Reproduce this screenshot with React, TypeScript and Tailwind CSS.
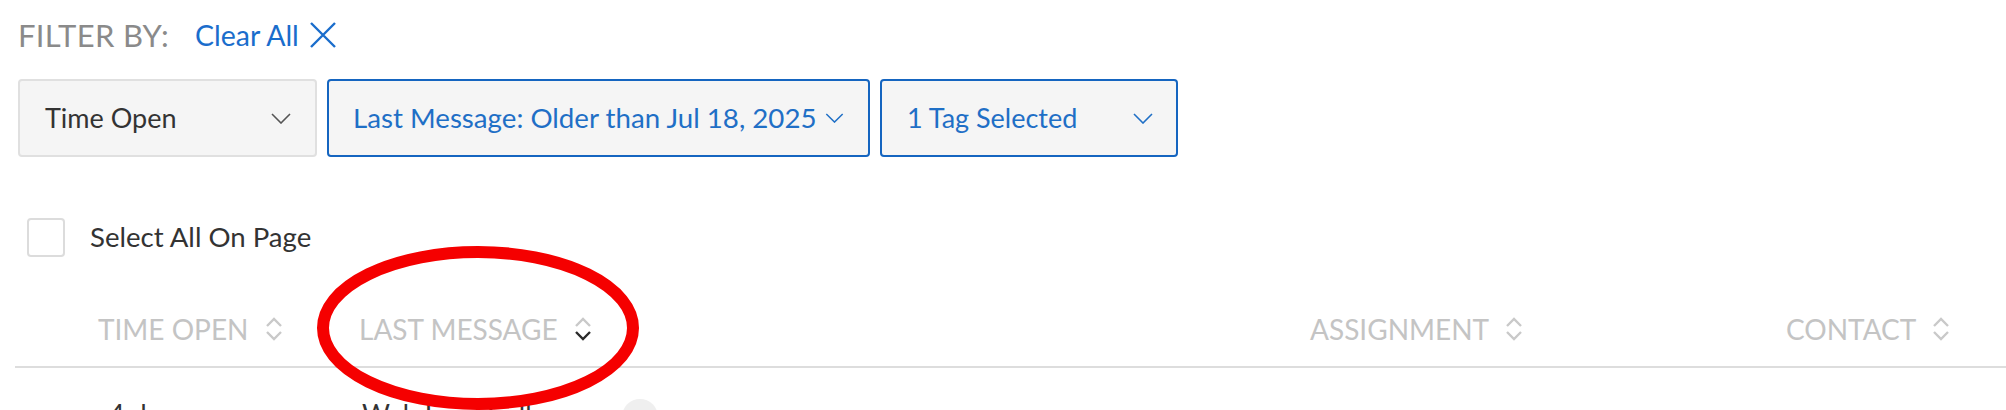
import React from 'react';

function Chevron({ className }: { className: string }) {
  return (
    <svg viewBox="0 0 20 11" className={className} fill="none" stroke="currentColor" strokeWidth={1.6}>
      <path d="M1 1l9 9 9-9" />
    </svg>
  );
}

function SortIcon({ active }: { active?: boolean }) {
  return (
    <svg viewBox="0 0 18 24" className="w-[18px] h-[24px]" fill="none" strokeWidth={2.4}>
      <path d="M2 9l7-7 7 7" stroke="#c9c9c9" />
      <path d="M2 15l7 7 7-7" stroke={active ? '#2b2b2b' : '#c9c9c9'} />
    </svg>
  );
}

const columns = [
  { label: 'TIME OPEN', active: false },
  { label: 'LAST MESSAGE', active: true },
  { label: 'ASSIGNMENT', active: false },
  { label: 'CONTACT', active: false },
];

export default function App() {
  return (
    <div className="relative w-full h-[410px] overflow-hidden bg-white font-['Lato','Noto_Sans',sans-serif]">
      {/* filter heading */}
      <div className="flex items-center h-[70px] pl-[18px]">
        <span className="text-[31px] text-[#8a8a8a] tracking-[0.3px]">FILTER BY:</span>
        <button className="ml-[26px] flex items-center text-[28.5px] text-[#1a6dcc]">
          Clear All
          <svg viewBox="0 0 28 28" className="ml-[10px] w-[28px] h-[28px]" fill="none" stroke="currentColor" strokeWidth={2.4}>
            <path d="M2 2l24 24M26 2L2 26" />
          </svg>
        </button>
      </div>

      {/* filter dropdowns */}
      <div className="flex mt-[9px] pl-[18px] gap-[10px]">
        <button className="flex items-center justify-between w-[299px] h-[78px] pl-[25px] pr-[24px] bg-[#f5f5f5] border-2 border-[#e0e0e0] rounded-[4px] text-[27px] text-[#333]">
          Time Open
          <Chevron className="w-[20px] h-[11px] text-[#555]" />
        </button>
        <button className="flex items-center w-[543px] h-[78px] pl-[24px] bg-[#f5f5f5] border-2 border-[#1565c0] rounded-[4px] text-[27.7px] text-[#1f6fc6]">
          Last Message: Older than Jul 18, 2025
          <Chevron className="ml-[8px] w-[19px] h-[10px] text-[#1f6fc6]" />
        </button>
        <button className="flex items-center justify-between w-[298px] h-[78px] pl-[25px] pr-[23px] bg-[#f5f5f5] border-2 border-[#1565c0] rounded-[4px] text-[27px] text-[#1f6fc6]">
          1 Tag Selected
          <Chevron className="w-[20px] h-[11px] text-[#1f6fc6]" />
        </button>
      </div>

      {/* select all */}
      <label className="flex items-center mt-[60px] ml-[27px] h-[40px]">
        <span className="w-[38px] h-[39px] border-2 border-[#dcdcdc] rounded-[4px] bg-white" />
        <span className="ml-[25px] text-[27.6px] text-[#333]">Select All On Page</span>
      </label>

      {/* table header */}
      <div className="grid grid-cols-[261px_951px_476px_1fr] items-center mt-[51px] h-[40px] ml-[98px]">
        {columns.map((c) => (
          <div key={c.label} className="flex items-center gap-[16px] text-[28px] text-[#c4c4c4]">
            {c.label}
            <SortIcon active={c.active} />
          </div>
        ))}
      </div>
      <div className="mt-[18px] ml-[15px] border-b-2 border-[#dddddd]" />

      {/* first row, cut by the viewport */}
      <div className="grid grid-cols-[253px_260px_1fr] items-start mt-[26px] ml-[109px] text-[27px] text-[#333]">
        <span>4 days</span>
        <span>Web Lead Call</span>
        <span className="mt-[5px] w-[36px] h-[36px] rounded-full bg-[#efefef]" />
      </div>

      {/* highlight annotation */}
      <svg className="absolute left-0 top-0 w-[2006px] h-[410px] pointer-events-none" viewBox="0 0 2006 410">
        <ellipse cx="478" cy="328" rx="155" ry="76" fill="none" stroke="#f50000" strokeWidth={12} />
      </svg>
    </div>
  );
}
